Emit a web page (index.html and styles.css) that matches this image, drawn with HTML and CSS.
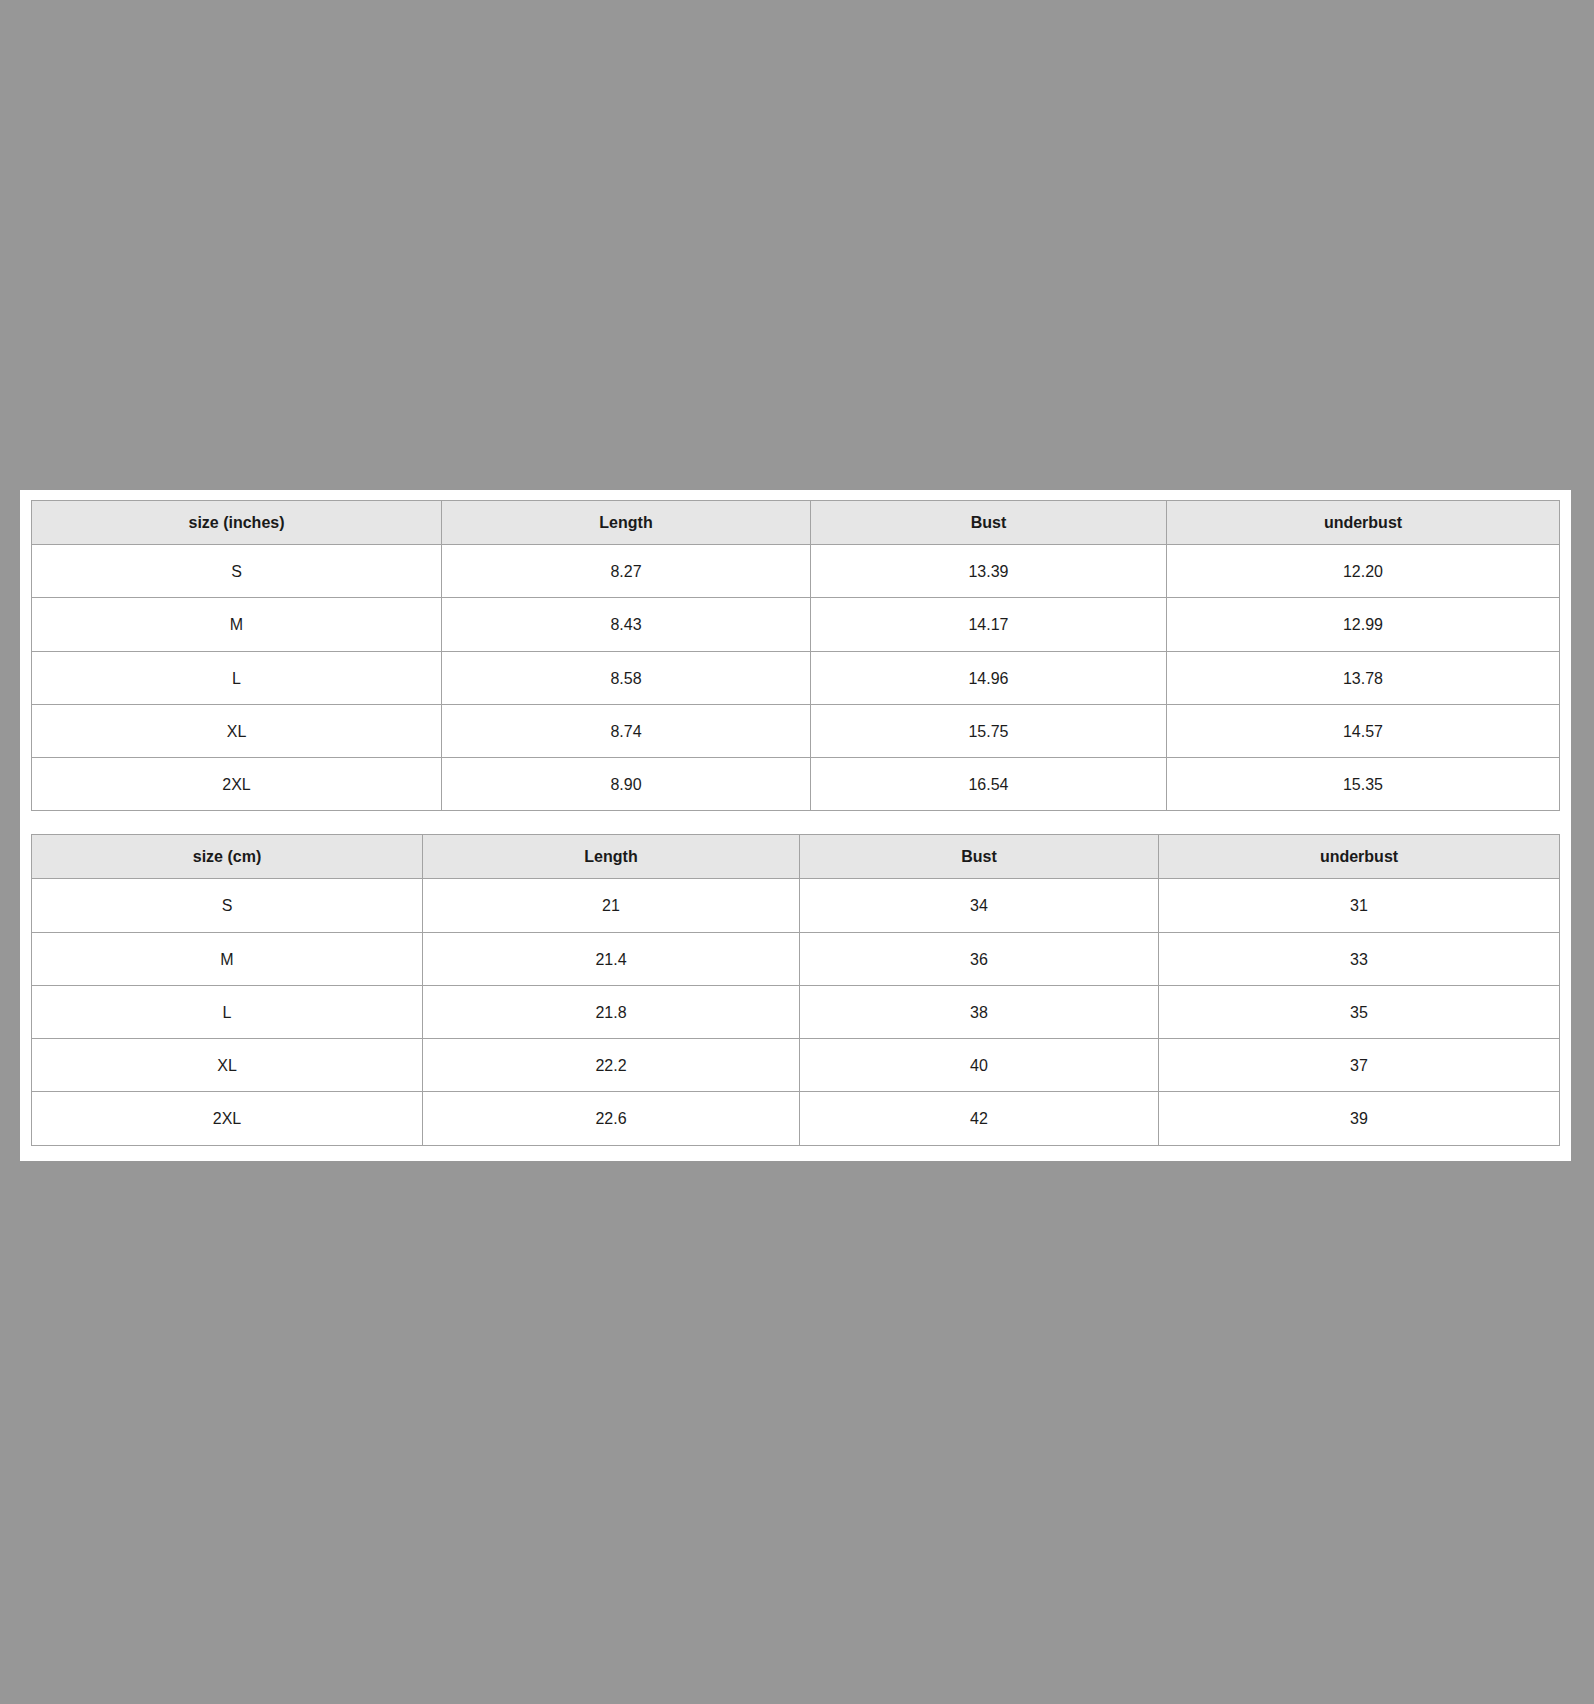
FILE: index.html
```html
<!DOCTYPE html>
<html>
<head>
<meta charset="utf-8">
<link rel="stylesheet" href="styles.css">
</head>
<body>
<div class="page">
  <div class="panel">
    <table class="chart inches">
      <colgroup><col class="c1"><col class="c2"><col class="c3"><col class="c4"></colgroup>
      <thead>
        <tr><th>size (inches)</th><th>Length</th><th>Bust</th><th>underbust</th></tr>
      </thead>
      <tbody>
        <tr><td>S</td><td>8.27</td><td>13.39</td><td>12.20</td></tr>
        <tr><td>M</td><td>8.43</td><td>14.17</td><td>12.99</td></tr>
        <tr><td>L</td><td>8.58</td><td>14.96</td><td>13.78</td></tr>
        <tr><td>XL</td><td>8.74</td><td>15.75</td><td>14.57</td></tr>
        <tr><td>2XL</td><td>8.90</td><td>16.54</td><td>15.35</td></tr>
      </tbody>
    </table>
    <table class="chart cm">
      <colgroup><col class="c1"><col class="c2"><col class="c3"><col class="c4"></colgroup>
      <thead>
        <tr><th>size (cm)</th><th>Length</th><th>Bust</th><th>underbust</th></tr>
      </thead>
      <tbody>
        <tr><td>S</td><td>21</td><td>34</td><td>31</td></tr>
        <tr><td>M</td><td>21.4</td><td>36</td><td>33</td></tr>
        <tr><td>L</td><td>21.8</td><td>38</td><td>35</td></tr>
        <tr><td>XL</td><td>22.2</td><td>40</td><td>37</td></tr>
        <tr><td>2XL</td><td>22.6</td><td>42</td><td>39</td></tr>
      </tbody>
    </table>
  </div>
</div>
</body>
</html>
```

FILE: styles.css
```css
html, body {
  margin: 0;
  padding: 0;
  background: #979797;
}
body {
  font-family: "Liberation Sans", Arial, sans-serif;
  color: #1c1c1c;
}
.page {
  padding: 490px 0 0 20px;
  height: 1214px;
}
.panel {
  width: 1528px;
  background: #ffffff;
  padding: 10px 12px 15px 11px;
  display: flex;
  flex-direction: column;
  gap: 23px;
}
.chart {
  width: 1528px;
  border-collapse: collapse;
  table-layout: fixed;
  border: 1px solid #a3a3a3;
}
.chart th,
.chart td {
  border: 1px solid #a3a3a3;
  text-align: center;
  vertical-align: middle;
  padding: 0;
  font-size: 16px;
}
.chart th {
  background: #e6e6e6;
  font-weight: bold;
  height: 43px;
  color: #1a1a1a;
}
.chart td {
  height: 50.25px;
  padding-top: 2px;
  font-weight: normal;
}
.inches .c1 { width: 410px; }
.inches .c2 { width: 369px; }
.inches .c3 { width: 356px; }
.inches .c4 { width: 393px; }
.cm .c1 { width: 391px; }
.cm .c2 { width: 377px; }
.cm .c3 { width: 359px; }
.cm .c4 { width: 401px; }
```
